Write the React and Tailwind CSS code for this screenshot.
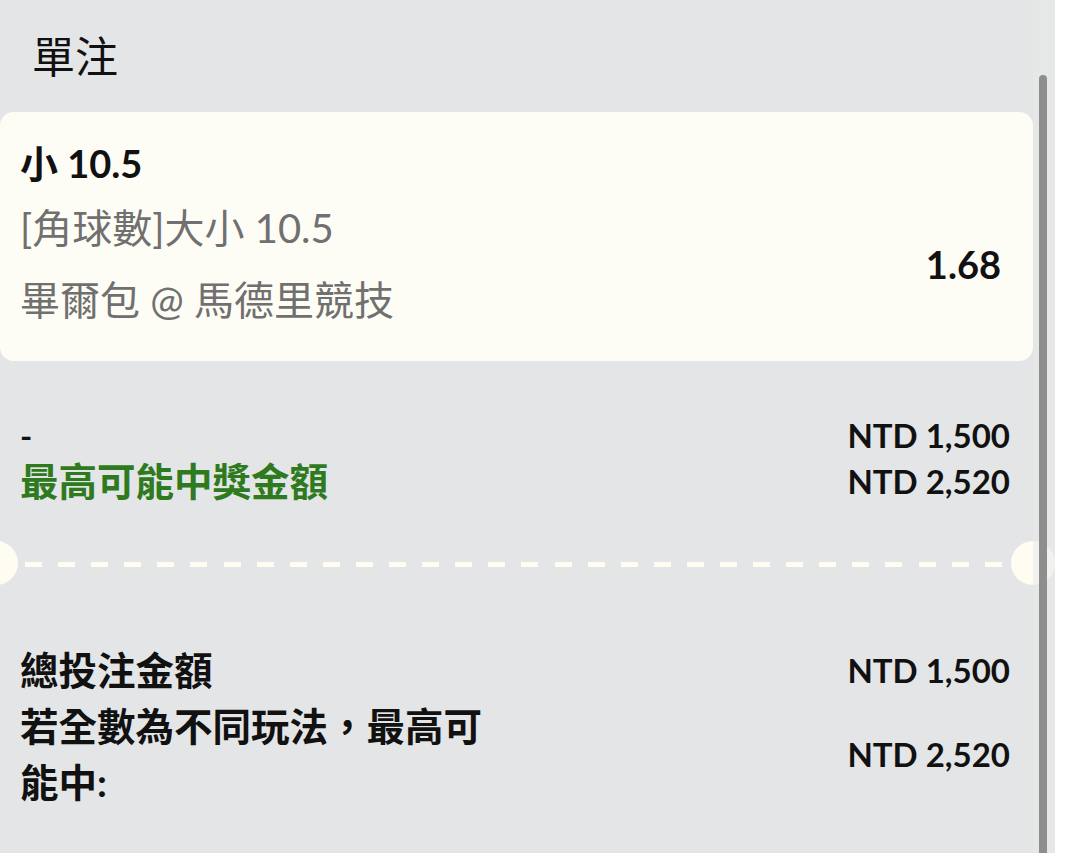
import React from 'react';

const font = "font-[Lato,'Noto_Sans_CJK_TC',sans-serif]";

const bet = {
  pick: '小 10.5',
  market: '[角球數]大小 10.5',
  match: '畢爾包 @ 馬德里競技',
  odds: '1.68',
  stake: 'NTD 1,500',
  payout: 'NTD 2,520',
};

export default function App() {
  return (
    <div className={`w-[1080px] h-[853px] bg-white flex overflow-hidden ${font}`}>
      <div className="relative w-[1055px] h-full bg-[#e4e5e7] overflow-hidden">
        {/* header */}
        <h1 className="pl-[32px] pt-[36px] text-[43px] leading-[42px] font-normal text-[#111]">單注</h1>

        {/* selection card */}
        <div className="mt-[34px] w-[1033px] rounded-[14px] bg-[#fefdf5] pl-[20px] pr-[32px] pt-[27px] pb-[25px]">
          <div className="text-[38px] leading-[48px] font-bold text-[#111]">{bet.pick}</div>
          <div className="mt-[5px] flex items-center justify-between">
            <div className="text-[40px] leading-[72px] text-[#707070]">
              <div>{bet.market}</div>
              <div>{bet.match}</div>
            </div>
            <div className="text-[38px] font-bold text-[#111]">{bet.odds}</div>
          </div>
        </div>

        {/* stake / payout */}
        <div className="mt-[51px] pl-[20px] pr-[45px] text-[33px] leading-[46px] font-bold">
          <div className="flex justify-between">
            <span className="text-[#111]">-</span>
            <span className="text-[#111]">{bet.stake}</span>
          </div>
          <div className="flex justify-between">
            <span className="text-[38.5px] text-[#2f7a1f]">最高可能中獎金額</span>
            <span className="text-[#111]">{bet.payout}</span>
          </div>
        </div>

        {/* divider with notches */}
        <div className="relative mt-[37px] h-[44px] flex items-center px-[25px]">
          <div className="absolute left-[-26px] top-0 w-[44px] h-[44px] rounded-full bg-[#fffdf2]" />
          <div className="flex-1 flex justify-between mt-[3px] mr-[28px]">
            {Array.from({ length: 30 }).map((_, i) => (
              <div key={i} className="w-[17px] h-[5px] bg-[#fffdf2]" />
            ))}
          </div>
          <div className="absolute left-[1011px] top-0 w-[44px] h-[44px] rounded-full bg-[#fffdf2]" />
        </div>

        {/* totals */}
        <div className="mt-[57px] pl-[20px] pr-[45px] text-[38.5px] leading-[56px] font-bold text-[#111]">
          <div className="flex justify-between items-center">
            <span>總投注金額</span>
            <span className="text-[33px]">{bet.stake}</span>
          </div>
          <div className="flex justify-between items-center">
            <span className="w-[490px]">若全數為不同玩法，最高可能中:</span>
            <span className="text-[33px]">{bet.payout}</span>
          </div>
        </div>

        {/* scrollbar */}
        <div className="absolute top-0 bottom-0 left-[1033px] w-[22px] bg-[#e8e9ea] opacity-60" />
        <div className="absolute top-[75px] -bottom-[10px] left-[1039px] w-[8px] rounded-t-full bg-[#8e8e8e]" />
      </div>
    </div>
  );
}
